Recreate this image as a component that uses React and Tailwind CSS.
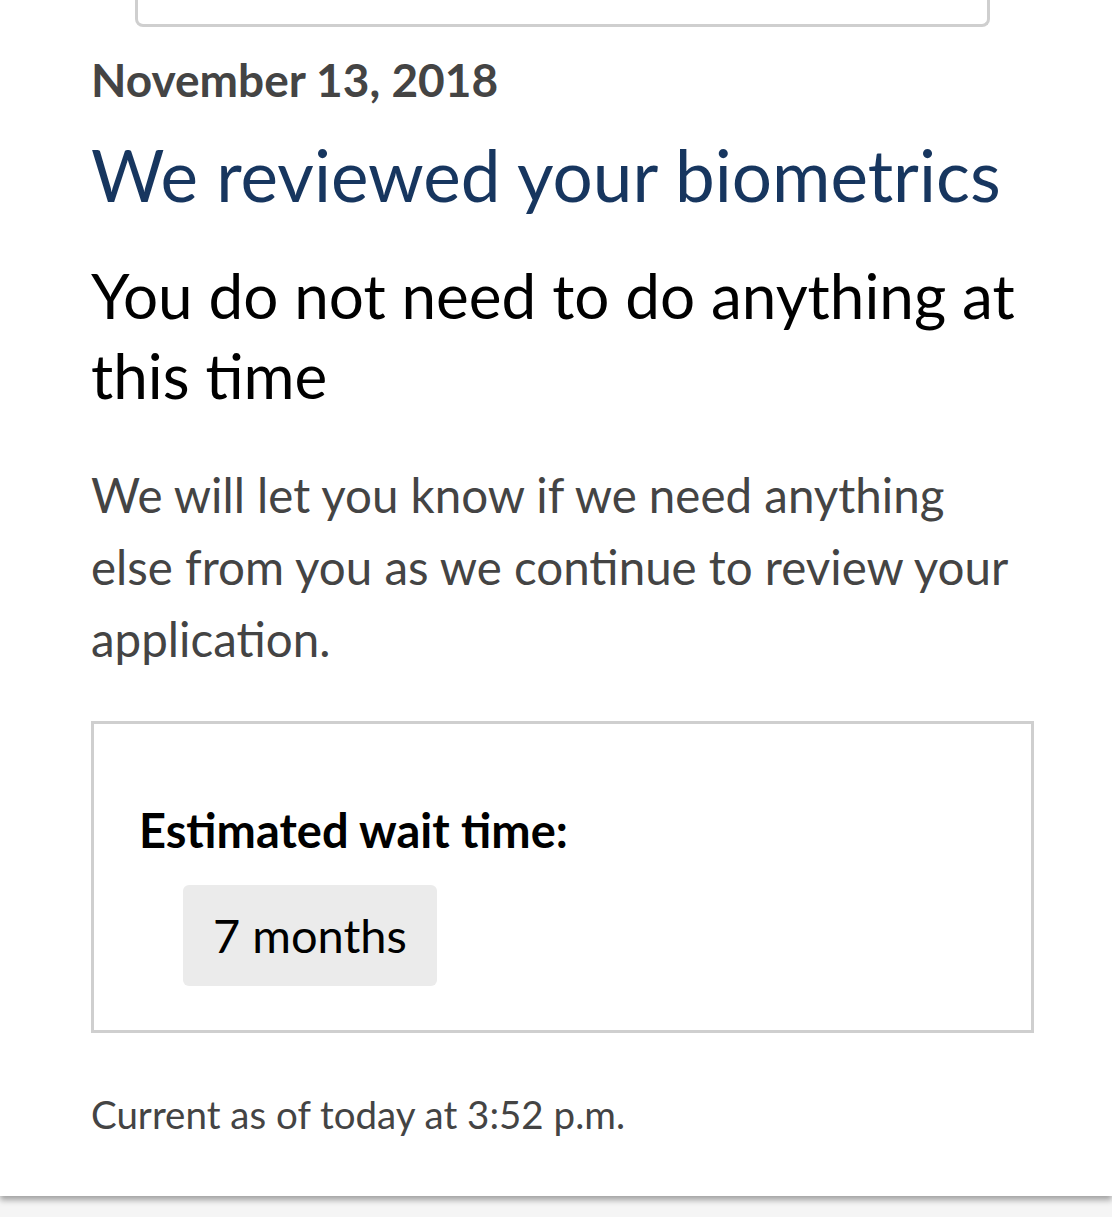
import React from 'react';

const App = () => {
  return (
    <div className="min-h-[1217px] bg-[#f5f5f5]" style={{ fontFamily: 'Lato, "Open Sans", sans-serif' }}>
      <div className="bg-white pb-[60px] shadow-[0_4px_6px_rgba(0,0,0,0.35)]">
        <div className="pl-[135px] pr-[122px]">
          <div className="h-[27px] rounded-b-[8px] border-x-[3px] border-b-[3px] border-[#cfcfcf] border-t-0" />
        </div>

        <div className="pl-[91px] pr-[78px]">
          <p className="mt-[25px] text-[46px] leading-[56px] font-bold text-[#444444]">
            November 13, 2018
          </p>
          <h1 className="mt-[27px] text-[71px] leading-[80px] text-[#17365f]">
            We reviewed your biometrics
          </h1>
          <h2 className="mt-[40px] text-[62px] leading-[80px] text-black">
            You do not need to do anything at this time
          </h2>
          <p className="mt-[44px] text-[47.5px] leading-[72px] text-[#444444]">
            We will let you know if we need anything else from you as we continue to review your application.
          </p>

          <div className="mt-[46px] border-[3px] border-[#cfcfcf] px-[45px] pt-[78px] pb-[44px]">
            <p className="text-[47px] leading-[56px] font-bold text-black">Estimated wait time:</p>
            <div className="mt-[27px] ml-[44px] inline-flex h-[101px] items-center rounded-[6px] bg-[#ebebeb] px-[30px]">
              <span className="text-[47px] text-black">7 months</span>
            </div>
          </div>

          <p className="mt-[59px] text-[38.5px] leading-[44px] text-[#444444]">
            Current as of today at 3:52 p.m.
          </p>
        </div>
      </div>
    </div>
  );
};

export default App;
